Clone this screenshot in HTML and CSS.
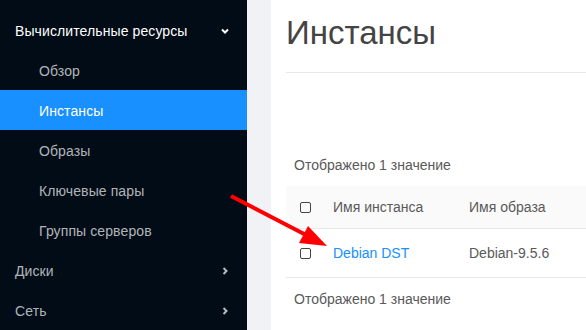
FILE: index.html
```html
<!DOCTYPE html>
<html lang="ru">

<head>
    <meta charset="UTF-8">
    <title>Инстансы</title>
    <link rel="stylesheet" href="styles.css">
</head>

<body>

<div class="layout">
    <nav class="sidebar">
        <div class="menu-item open">
            <span>Вычислительные ресурсы</span>
            <svg class="chevron" width="8" height="8" viewBox="0 0 8 8"><path d="M1 2.5 L4 5.5 L7 2.5" fill="none" stroke="#fff" stroke-width="2"/></svg>
        </div>
        <div class="menu-item sub">Обзор</div>
        <div class="menu-item sub active">Инстансы</div>
        <div class="menu-item sub">Образы</div>
        <div class="menu-item sub">Ключевые пары</div>
        <div class="menu-item sub">Группы серверов</div>
        <div class="menu-item">
            <span>Диски</span>
            <svg class="chevron" width="8" height="8" viewBox="0 0 8 8"><path d="M2.5 1 L5.5 4 L2.5 7" fill="none" stroke="#b8bcc1" stroke-width="2"/></svg>
        </div>
        <div class="menu-item">
            <span>Сеть</span>
            <svg class="chevron" width="8" height="8" viewBox="0 0 8 8"><path d="M2.5 1 L5.5 4 L2.5 7" fill="none" stroke="#b8bcc1" stroke-width="2"/></svg>
        </div>
    </nav>

    <main class="content">
        <h1 class="page-title">Инстансы</h1>

        <div class="count">Отображено 1 значение</div>

        <table class="instances">
            <tr>
                <th class="check-col"><input type="checkbox" class="check"></th>
                <th class="name-col">Имя инстанса</th>
                <th>Имя образа</th>
            </tr>
            <tr>
                <td class="check-col"><input type="checkbox" class="check"></td>
                <td class="name-col"><a href="#">Debian DST</a></td>
                <td>Debian-9.5.6</td>
            </tr>
        </table>

        <div class="count footer-count">Отображено 1 значение</div>
    </main>
</div>

<svg class="arrow" width="586" height="330" viewBox="0 0 586 330">
    <line x1="231" y1="196" x2="308" y2="236" stroke="#ff0000" stroke-width="4"/>
    <polygon points="327,246 308,226 299,243" fill="#ff0000"/>
</svg>

</body>
</html>
```

FILE: styles.css
```css
body {
    margin: 0;
    font-family: "Liberation Sans", Arial, sans-serif;
    background-color: #f0f2f5;
    overflow: hidden;
    height: 330px;
}

.layout {
    display: flex;
    height: 330px;
}

.sidebar {
    width: 247px;
    flex-shrink: 0;
    background-color: #010c17;
    padding-top: 10px;
    box-sizing: border-box;
}

.menu-item {
    display: flex;
    align-items: center;
    justify-content: space-between;
    height: 40px;
    padding: 2px 18px 0 15px;
    box-sizing: border-box;
    font-size: 14px;
    letter-spacing: 0.1px;
    color: rgba(255, 255, 255, 0.7);
}

.menu-item.open {
    color: #fff;
}

.menu-item.sub {
    padding-left: 39px;
}

.menu-item.active {
    background-color: #1890ff;
    color: #fff;
}

.chevron {
    display: block;
}

.content {
    margin-left: 24px;
    background-color: #fff;
    padding: 13px 0 0 15px;
    min-width: 700px;
}

.page-title {
    margin: 0;
    font-size: 33px;
    font-weight: normal;
    line-height: 40px;
    color: #444;
    padding-bottom: 19px;
    border-bottom: 1px solid #e8e8e8;
}

.count {
    margin: 81px 0 0 8px;
    font-size: 14px;
    line-height: 22px;
    color: #595959;
}

.footer-count {
    margin-top: 10px;
}

.instances {
    margin-top: 10px;
    width: 100%;
    border-collapse: collapse;
    font-size: 14px;
    color: #595959;
}

.instances th,
.instances td {
    text-align: left;
    font-weight: normal;
    padding: 0 14px;
    border-bottom: 1px solid #e8e8e8;
}

.instances th {
    background-color: #fafafa;
    height: 42px;
}

.instances td {
    height: 48px;
}

.instances .check-col {
    width: 33px;
    padding-right: 8px;
    box-sizing: border-box;
}

.name-col {
    width: 136px;
    box-sizing: border-box;
}

.instances a {
    color: #1890ff;
    text-decoration: none;
}

.check {
    appearance: none;
    display: block;
    width: 11px;
    height: 11px;
    margin: 1px 0 0 0;
    border: 1.5px solid #444;
    border-radius: 2px;
    box-sizing: border-box;
}

.arrow {
    position: absolute;
    left: 0;
    top: 0;
    pointer-events: none;
}
```
